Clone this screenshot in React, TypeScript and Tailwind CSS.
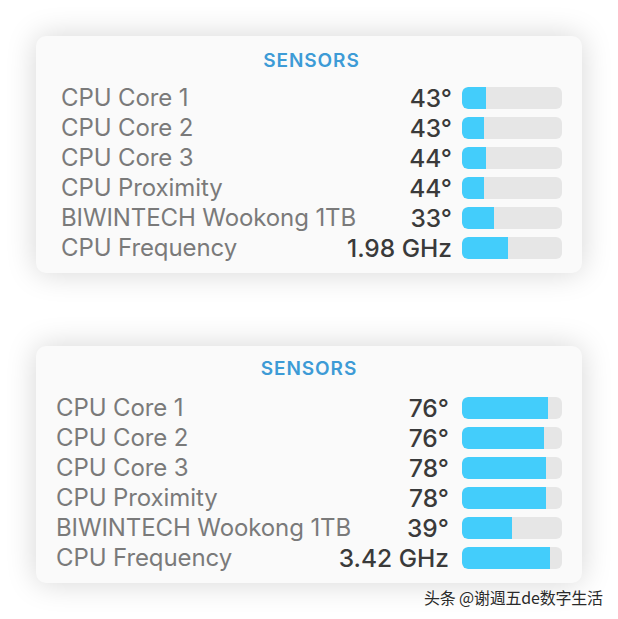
import React from "react";

type Sensor = { name: string; value: string; pct: number };

const before: Sensor[] = [
  { name: "CPU Core 1", value: "43°", pct: 24 },
  { name: "CPU Core 2", value: "43°", pct: 22 },
  { name: "CPU Core 3", value: "44°", pct: 24 },
  { name: "CPU Proximity", value: "44°", pct: 22 },
  { name: "BIWINTECH Wookong 1TB", value: "33°", pct: 32 },
  { name: "CPU Frequency", value: "1.98 GHz", pct: 46 },
];

const after: Sensor[] = [
  { name: "CPU Core 1", value: "76°", pct: 86 },
  { name: "CPU Core 2", value: "76°", pct: 82 },
  { name: "CPU Core 3", value: "78°", pct: 84 },
  { name: "CPU Proximity", value: "78°", pct: 84 },
  { name: "BIWINTECH Wookong 1TB", value: "39°", pct: 50 },
  { name: "CPU Frequency", value: "3.42 GHz", pct: 88 },
];

function SensorsCard({ rows, first }: { rows: Sensor[]; first?: boolean }) {
  return (
    <div
      className={`w-[546px] h-[237px] rounded-[10px] bg-[#fafafa] shadow-[0_0_30px_rgba(0,0,0,0.17)] flex flex-col ${
        first ? "pl-[25px] pr-[20px] pt-[14px]" : "pl-[20px] pr-[20px] pt-[12px]"
      }`}
    >
      <div className="h-[22px] flex items-center justify-center text-[19px] font-semibold tracking-[0.9px] text-[#3d9bd6]">
        SENSORS
      </div>
      <div className={`flex flex-col ${first ? "mt-[11px]" : "mt-[13px]"}`}>
        {rows.map((r) => (
          <div key={r.name} className="h-[30px] flex items-center">
            <span className="flex-1 text-[24px] leading-none text-[#7a7a7a] tracking-[-0.1px]">{r.name}</span>
            <span className={`text-[24.5px] leading-none font-medium text-[#3a3a3a] ${first ? "mr-[10px]" : "mr-[13px]"}`}>
              {r.value}
            </span>
            <div className="w-[100px] h-[22px] rounded-[6px] bg-[#e6e6e6] overflow-hidden flex">
              <div className="h-full bg-[#43cdfb] rounded-l-[6px]" style={{ width: `${r.pct}%` }} />
            </div>
          </div>
        ))}
      </div>
    </div>
  );
}

export default function App() {
  return (
    <div
      className="relative w-[618px] h-[619px] bg-white flex flex-col items-start pl-[36px] pt-[36px] gap-[73px]"
      style={{ fontFamily: "Inter, 'Noto Sans', sans-serif" }}
    >
      <SensorsCard rows={before} first />
      <SensorsCard rows={after} />
      <div
        className="absolute left-[424px] top-[585px] text-[16px] text-[#2a2a2a] tracking-[-0.2px] [text-shadow:0_0_2px_#ffffff]"
        style={{ fontFamily: "'Noto Sans CJK SC', 'Noto Sans', sans-serif" }}
      >
        头条 @谢週五de数字生活
      </div>
    </div>
  );
}
